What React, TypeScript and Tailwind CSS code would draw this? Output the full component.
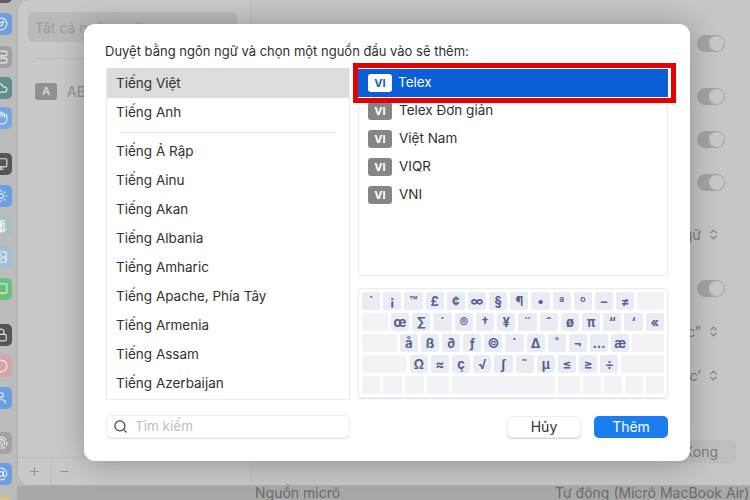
import React from "react";
import { Search, ChevronsUpDown, Plus, Minus, Compass, Server, Cloud, Hand, Monitor, Sun, Flower2, Image, MessageSquare, Lock, User, Fingerprint, AtSign, Circle } from "lucide-react";

const langs = ["Tiếng Ả Rập","Tiếng Ainu","Tiếng Akan","Tiếng Albania","Tiếng Amharic","Tiếng Apache, Phía Tây","Tiếng Armenia","Tiếng Assam","Tiếng Azerbaijan"];
const sources = ["Telex Đơn giản","Việt Nam","VIQR","VNI"];
const rows: { w: number; t: string }[][] = [
  ["`","¡","™","£","¢","∞","§","¶","•","ª","º","–","≠",""].map((t,i)=>({w:i===13?27:18.3,t})),
  ["","œ","∑","´","®","†","¥","¨","ˆ","ø","π","“","‘","«"].map((t,i)=>({w:i===0?26:18.3,t})),
  ["","å","ß","∂","ƒ","©","˙","∆","˚","¬","…","æ",""].map((t,i)=>({w:i===0?35:i===12?32:18.3,t})),
  ["","Ω","≈","ç","√","∫","˜","µ","≤","≥","÷",""].map((t,i)=>({w:i===0?45:i===11?43:18.3,t})),
  [18,19,19,22,102,22,18,18,18,18].map(w=>({w,t:""})),
];

const dock = [
  { c: "-mt-[19px] bg-[#5f5f5f]", I: Monitor },
  { c: "mt-[10px] bg-[#6e9fdc]", I: Compass },
  { c: "mt-[11px] bg-[#a0a0a0]", I: Server },
  { c: "mt-[9px] bg-[#5c8f8c]", I: Cloud },
  { c: "mt-[8px] bg-[#78a7e0]", I: Hand },
  { c: "mt-[24px] bg-[#565656]", I: Monitor },
  { c: "mt-[10px] bg-[#6c9fe0]", I: Sun },
  { c: "mt-[8px] bg-[#a9c0c0]", I: Flower2 },
  { c: "mt-[9px] bg-[#9fc0d8]", I: Image },
  { c: "mt-[10px] bg-[#6cbf7c]", I: MessageSquare },
  { c: "mt-[24px] bg-[#555555]", I: Lock },
  { c: "mt-[9px] bg-[#d3a5a8]", I: Circle },
  { c: "mt-[10px] bg-[#6c9fe0]", I: User },
  { c: "mt-[23px] bg-[#a2a2a2]", I: Fingerprint },
  { c: "mt-[9px] bg-[#6c9fe0]", I: AtSign },
  { c: "mt-[12px] bg-[#d8c27a]", I: Circle },
];

function Toggle({ className = "" }: { className?: string }) {
  return <div className={`w-7 h-[17px] shrink-0 rounded-full bg-[#a4a4a4] flex justify-end items-center p-px ${className}`}><div className="w-[15px] h-[15px] rounded-full bg-[#c8c8c8]" /></div>;
}

function Vi({ active }: { active?: boolean }) {
  return <span className={`w-6 h-[18px] shrink-0 rounded-[3px] flex items-center justify-center text-[11px] font-bold ${active ? "bg-white text-[#0a5fd6]" : "bg-[#858585] text-white"}`}>VI</span>;
}

function Selector({ label, className }: { label: string; className: string }) {
  return <div className={`h-5 mr-[5px] flex items-center gap-[6px] ${className}`}>{label}<ChevronsUpDown size={13} /></div>;
}

export default function App() {
  return (
    <div className="relative w-[750px] h-[500px] overflow-hidden bg-[#bcbcbc] font-['Inter','Liberation_Sans',sans-serif]">
      <div className="flex h-[500px]">
        <div className="w-[17px] shrink-0 flex flex-col">
          {dock.map(({ c, I }, i) => (
            <div key={i} className={`w-[23px] h-[22px] shrink-0 -ml-[11px] rounded-[5px] flex items-center justify-center text-white/80 ${c}`}>
              <I size={14} />
            </div>
          ))}
        </div>
        <div className="flex-1 flex flex-col min-w-0">
          <div className="h-[486px] flex rounded-l-[12px] overflow-hidden bg-[#c6c6c6] border-l border-b border-[#adadad]">
            <div className="w-[233px] shrink-0 bg-[#c9c9c9] border-r border-[#bcbcbc] flex flex-col">
              <div className="mt-3 ml-[10px] mr-[13px] h-[30px] rounded-md bg-[#bababa] px-[7px] flex items-center text-[#9a9a9a] text-[14px]">Tất cả ngôn ngữ</div>
              <div className="h-px bg-[#bababa] mx-[17px] mt-4" />
              <div className="mt-[22px] ml-[17px] flex items-center gap-[10px] text-[#929292] text-[14px]">
                <span className="w-[22px] h-[17px] rounded-[3px] bg-[#909090] text-[#d2d2d2] font-bold text-[11px] flex items-center justify-center">A</span>ABC
              </div>
              <div className="mt-auto h-7 flex items-center border-t border-[#bdbdbd] text-[#929292]">
                <div className="w-[33px] h-full border-r border-[#bdbdbd] flex items-center justify-end pr-[9px]"><Plus size={13} /></div>
                <div className="pl-[7px]"><Minus size={13} /></div>
              </div>
            </div>
            <div className="flex-1 flex flex-col items-end pr-[25px] pt-[35px] text-[#7b7b7b] text-[14px]">
              <Toggle />
              <Toggle className="mt-[36px]" />
              <Toggle className="mt-[26px]" />
              <Toggle className="mt-[26px]" />
              <Selector label="ngữ" className="mt-[33px]" />
              <Toggle className="mt-[36px]" />
              <Selector label="c”" className="mt-[24px]" />
              <Selector label="c’" className="mt-[24px]" />
              <div className="mt-[55px] -mr-[11px] h-[23px] w-[69px] shrink-0 rounded-md bg-[#bebebe] flex items-center justify-end pr-[18px]">Xong</div>
            </div>
          </div>
          <div className="flex-1 bg-[#a8a8a8] text-[14px] leading-[14px] text-[#6b6b6b] flex whitespace-nowrap">
            <span className="ml-[238px] w-[300px]">Nguồn micrô</span>
            <span>Tự động (Micrô MacBook Air)</span>
          </div>
        </div>
      </div>

      {/* Dialog */}
      <div className="absolute left-[84px] top-[24px] w-[606px] h-[437px] bg-white rounded-[11px] shadow-[0_2px_30px_rgba(0,0,0,0.28)] px-[22px] pt-[19px] flex flex-col text-[#303030]">
        <div className="-ml-px text-[13px] leading-[16px]">Duyệt bằng ngôn ngữ và chọn một nguồn đầu vào sẽ thêm:</div>
        <div className="flex gap-2 mt-[9px]">
          <div className="w-[244px] h-[332px] border border-[#ececec] border-t-0 pt-px text-[13.5px] overflow-hidden">
            <div className="h-[29px] -mt-px pt-px box-content bg-[#dcdcdc] flex items-center pl-[9px]">Tiếng Việt</div>
            <div className="h-[29px] flex items-center pl-[9px]">Tiếng Anh</div>
            <div className="h-px bg-[#e8e8e8] mx-[13px] mt-[5px] mb-1" />
            {langs.map(l=><div key={l} className="h-[29px] flex items-center pl-[9px]">{l}</div>)}
          </div>
          <div className="w-[310px] flex flex-col">
            <div className="relative h-[208px] border border-[#ececec] text-[13.5px]">
              <div className="absolute -left-[6px] -top-[6px] -right-[9px] h-[40px] border-[5px] border-[#e60000] pt-px pb-px pr-[3px] bg-white">
                <div className="h-full bg-[#0a5fd6] text-white flex items-center gap-[6px] pl-[10px]"><Vi active /><span className="pb-[2px]">Telex</span></div>
              </div>
              <div className="pt-[28px] pl-[9px] flex flex-col">
                {sources.map(s=><div key={s} className="h-7 flex items-center gap-[7px]"><Vi /><span className="pb-[2px]">{s}</span></div>)}
              </div>
            </div>
            <div className="mt-3 h-[110px] rounded-[3px] border border-[#ececec] shadow-[0_1px_2px_rgba(0,0,0,0.12)] p-[3px] flex flex-col gap-[3px]">
              {rows.map((r,i)=>(
                <div key={i} className="flex gap-[3px] h-[18px] shrink-0">
                  {r.map((k,j)=>(
                    <div key={j} style={{flexGrow:k.w,flexBasis:0}} className={`rounded-[2px] flex items-center justify-center leading-none text-[13px] font-bold text-[#51638f] ${k.t?"bg-[#e9ecf3]":"bg-[#f2f3f7]"}`}>{k.t}</div>
                  ))}
                </div>
              ))}
            </div>
          </div>
        </div>
        <div className="flex items-center justify-between mt-[15px]">
          <div className="w-[244px] h-[23px] rounded-[5px] border border-[#f0f0f0] shadow-[0_1px_1px_rgba(0,0,0,0.12)] flex items-center gap-[7px] pl-[6px] text-[13.5px] text-[#bdbdbd]">
            <Search size={15} className="text-[#444]" />Tìm kiếm
          </div>
          <div className="flex gap-[13px] text-[14px]">
            <div className="w-[74px] h-[22px] rounded-[5px] bg-white border border-[#eee] shadow-[0_1px_1px_rgba(0,0,0,0.18)] flex items-center justify-center">Hủy</div>
            <div className="w-[74px] h-[22px] rounded-[5px] bg-[#1a7df0] text-white flex items-center justify-center">Thêm</div>
          </div>
        </div>
      </div>
    </div>
  );
}
